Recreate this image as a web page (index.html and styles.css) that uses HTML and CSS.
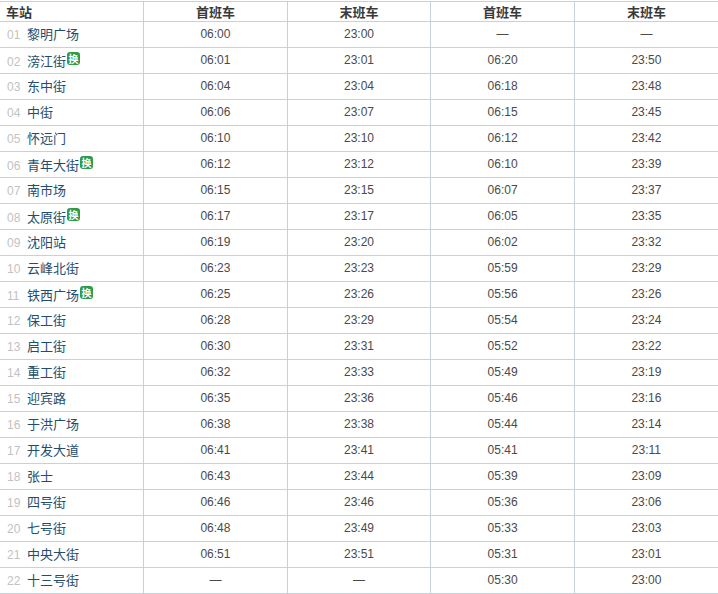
FILE: index.html
```html
<!DOCTYPE html>
<html lang="zh">
<head>
<meta charset="utf-8">
<link rel="stylesheet" href="styles.css">
</head>
<body>
<table class="tt">
<colgroup><col class="c"><col class="c"><col class="c"><col class="c"><col class="c"></colgroup>
<thead>
<tr><th class="st">车站</th><th>首班车</th><th>末班车</th><th>首班车</th><th>末班车</th></tr>
</thead>
<tbody>
<tr><td class="st"><span class="no">01</span><span class="nm">黎明广场</span></td><td>06:00</td><td>23:00</td><td>—</td><td>—</td></tr>
<tr><td class="st"><span class="no">02</span><span class="nm">滂江街</span><span class="hb">换</span></td><td>06:01</td><td>23:01</td><td>06:20</td><td>23:50</td></tr>
<tr><td class="st"><span class="no">03</span><span class="nm">东中街</span></td><td>06:04</td><td>23:04</td><td>06:18</td><td>23:48</td></tr>
<tr><td class="st"><span class="no">04</span><span class="nm">中街</span></td><td>06:06</td><td>23:07</td><td>06:15</td><td>23:45</td></tr>
<tr><td class="st"><span class="no">05</span><span class="nm">怀远门</span></td><td>06:10</td><td>23:10</td><td>06:12</td><td>23:42</td></tr>
<tr><td class="st"><span class="no">06</span><span class="nm">青年大街</span><span class="hb">换</span></td><td>06:12</td><td>23:12</td><td>06:10</td><td>23:39</td></tr>
<tr><td class="st"><span class="no">07</span><span class="nm">南市场</span></td><td>06:15</td><td>23:15</td><td>06:07</td><td>23:37</td></tr>
<tr><td class="st"><span class="no">08</span><span class="nm">太原街</span><span class="hb">换</span></td><td>06:17</td><td>23:17</td><td>06:05</td><td>23:35</td></tr>
<tr><td class="st"><span class="no">09</span><span class="nm">沈阳站</span></td><td>06:19</td><td>23:20</td><td>06:02</td><td>23:32</td></tr>
<tr><td class="st"><span class="no">10</span><span class="nm">云峰北街</span></td><td>06:23</td><td>23:23</td><td>05:59</td><td>23:29</td></tr>
<tr><td class="st"><span class="no">11</span><span class="nm">铁西广场</span><span class="hb">换</span></td><td>06:25</td><td>23:26</td><td>05:56</td><td>23:26</td></tr>
<tr><td class="st"><span class="no">12</span><span class="nm">保工街</span></td><td>06:28</td><td>23:29</td><td>05:54</td><td>23:24</td></tr>
<tr><td class="st"><span class="no">13</span><span class="nm">启工街</span></td><td>06:30</td><td>23:31</td><td>05:52</td><td>23:22</td></tr>
<tr><td class="st"><span class="no">14</span><span class="nm">重工街</span></td><td>06:32</td><td>23:33</td><td>05:49</td><td>23:19</td></tr>
<tr><td class="st"><span class="no">15</span><span class="nm">迎宾路</span></td><td>06:35</td><td>23:36</td><td>05:46</td><td>23:16</td></tr>
<tr><td class="st"><span class="no">16</span><span class="nm">于洪广场</span></td><td>06:38</td><td>23:38</td><td>05:44</td><td>23:14</td></tr>
<tr><td class="st"><span class="no">17</span><span class="nm">开发大道</span></td><td>06:41</td><td>23:41</td><td>05:41</td><td>23:11</td></tr>
<tr><td class="st"><span class="no">18</span><span class="nm">张士</span></td><td>06:43</td><td>23:44</td><td>05:39</td><td>23:09</td></tr>
<tr><td class="st"><span class="no">19</span><span class="nm">四号街</span></td><td>06:46</td><td>23:46</td><td>05:36</td><td>23:06</td></tr>
<tr><td class="st"><span class="no">20</span><span class="nm">七号街</span></td><td>06:48</td><td>23:49</td><td>05:33</td><td>23:03</td></tr>
<tr><td class="st"><span class="no">21</span><span class="nm">中央大街</span></td><td>06:51</td><td>23:51</td><td>05:31</td><td>23:01</td></tr>
<tr><td class="st"><span class="no">22</span><span class="nm">十三号街</span></td><td>—</td><td>—</td><td>05:30</td><td>23:00</td></tr>
</tbody>
</table>
</body>
</html>
```
FILE: styles.css
```css
html, body {
  margin: 0;
  padding: 0;
  background: #ffffff;
}
body {
  padding-top: 1px;
  font-family: "Liberation Sans", Arial, "Noto Sans CJK SC", sans-serif;
}
.tt {
  width: 718px;
  border-collapse: collapse;
  table-layout: fixed;
}
.tt .c {
  width: 143.6px;
}
.tt th, .tt td {
  border: 1px solid #c5d2db;
  padding: 0;
  text-align: center;
  white-space: nowrap;
  vertical-align: middle;
  overflow: hidden;
}
.tt tr > :first-child {
  border-left: none;
}
.tt tr > :last-child {
  border-right: none;
}
.tt th {
  height: 19px;
  font-family: "Noto Sans CJK SC", sans-serif;
  font-size: 13px;
  font-weight: bold;
  color: #3a3a3a;
  line-height: 15px;
}
.tt th.st {
  text-align: left;
  padding-left: 6px;
}
.tt td {
  height: 25px;
  font-size: 12px;
  color: #4a4a4a;
  line-height: 15px;
}
.tt td.st {
  text-align: left;
  padding-left: 7px;
}
.no {
  display: inline-block;
  width: 20px;
  font-size: 12px;
  line-height: 15px;
  color: #c2c2c2;
}
.nm {
  font-family: "Noto Sans CJK SC", sans-serif;
  font-size: 13px;
  line-height: 15px;
  color: #1f4e6e;
}
.hb {
  display: inline-block;
  width: 13px;
  height: 13px;
  margin-left: 1px;
  border-radius: 3px;
  background: #2f9c4c;
  color: #ffffff;
  font-family: "Noto Sans CJK SC", sans-serif;
  font-size: 10px;
  font-weight: bold;
  line-height: 13px;
  text-align: center;
  vertical-align: 3px;
}
```
